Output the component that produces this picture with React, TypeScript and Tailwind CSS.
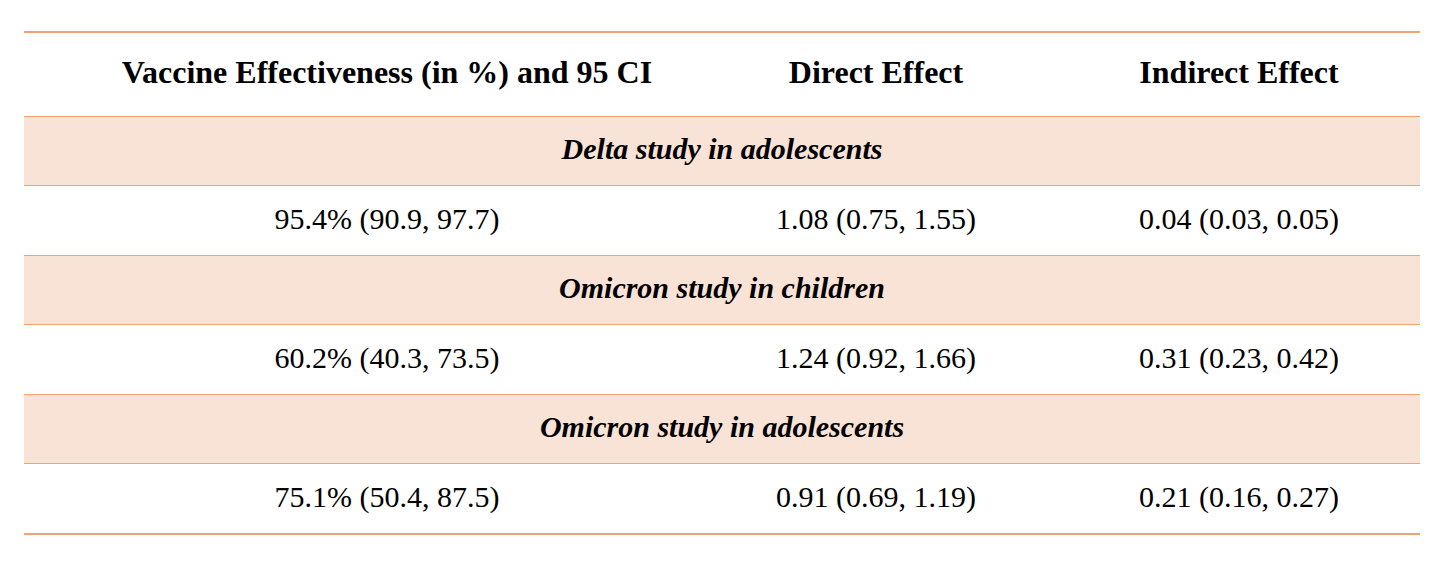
import React from 'react'

const rows = [
  {
    title: 'Delta study in adolescents',
    ve: '95.4% (90.9, 97.7)',
    direct: '1.08 (0.75, 1.55)',
    indirect: '0.04 (0.03, 0.05)',
  },
  {
    title: 'Omicron study in children',
    ve: '60.2% (40.3, 73.5)',
    direct: '1.24 (0.92, 1.66)',
    indirect: '0.31 (0.23, 0.42)',
  },
  {
    title: 'Omicron study in adolescents',
    ve: '75.1% (50.4, 87.5)',
    direct: '0.91 (0.69, 1.19)',
    indirect: '0.21 (0.16, 0.27)',
  },
]

const cols = 'grid grid-cols-[726px_252px_418px]'

export default function App() {
  return (
    <div className="w-full h-[575px] bg-white pt-[31px] pl-[24px] font-['Liberation_Serif','Times_New_Roman',serif] text-black">
      <div className="w-[1396px] border-t-2 border-[#f2a172]">
        <div className={`${cols} h-[84px] items-center border-b border-[#f2a172] text-[32px] font-bold leading-none`}>
          <div className="text-center pb-[5px]">Vaccine Effectiveness (in %) and 95 CI</div>
          <div className="text-center pb-[5px]">Direct Effect</div>
          <div className="text-center pl-[56px] pb-[5px]">Indirect Effect</div>
        </div>

        {rows.map((r, i) => (
          <React.Fragment key={r.title}>
            <div className="h-[69px] flex items-center justify-center pb-[4px] bg-[#f9e3d6] border-b border-[#f2a172] text-[30px] font-bold italic leading-none">
              {r.title}
            </div>
            <div
              className={`${cols} items-center pb-[4px] text-[30px] leading-none ${
                i === rows.length - 1 ? 'h-[71px] border-b-2' : 'h-[70px] border-b'
              } border-[#f2a172]`}
            >
              <div className="text-center">{r.ve}</div>
              <div className="text-center">{r.direct}</div>
              <div className="text-center pl-[56px]">{r.indirect}</div>
            </div>
          </React.Fragment>
        ))}
      </div>
    </div>
  )
}
